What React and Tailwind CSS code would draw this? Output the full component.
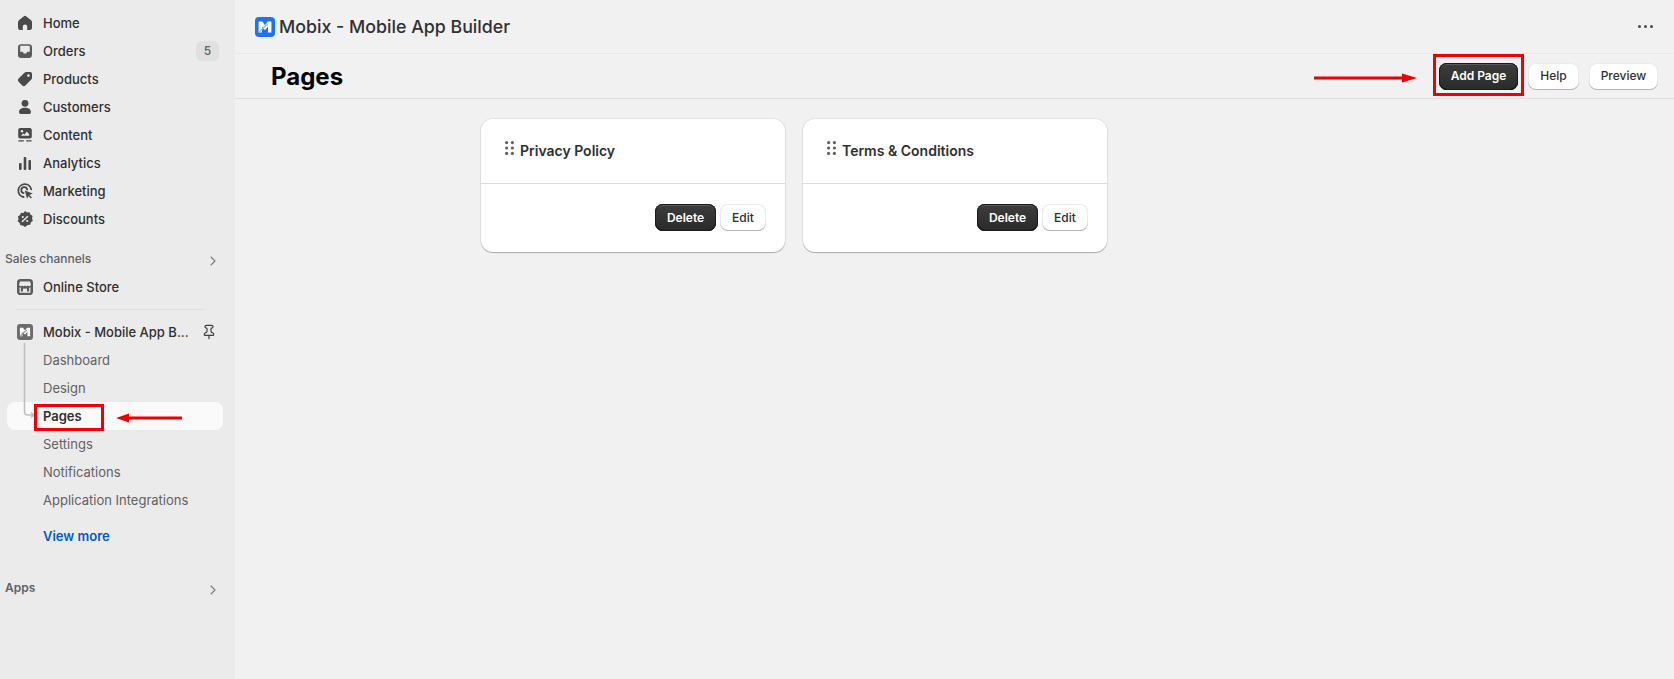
import { ChevronRight, Pin } from "lucide-react";

const darkBtn =
  "h-[27px] rounded-lg bg-gradient-to-b from-[#3d3d3d] to-[#2a2a2a] text-white text-xs font-semibold shadow-[inset_0_0_0_1px_#1a1a1a,inset_0_2px_0_#5a5a5a,inset_0_-1px_0_#111]";
const lightBtn =
  "h-[27px] rounded-lg bg-white text-[#303030] text-xs font-medium shadow-[inset_0_-1px_0_#b5b5b5,inset_0_0_0_1px_rgba(0,0,0,0.08)]";

// sidebar icons
function HomeIcon() {
  return (
    <svg viewBox="0 0 20 20" className="w-5 h-5" fill="#4a4a4a">
      <path d="M8.6 3.4a2.2 2.2 0 0 1 2.8 0l4.4 3.6a3 3 0 0 1 1.2 2.4v5.4a2.2 2.2 0 0 1-2.2 2.2h-2.6v-3.4a2.2 2.2 0 0 0-4.4 0V17H5.2A2.2 2.2 0 0 1 3 14.8V9.4A3 3 0 0 1 4.2 7z" />
    </svg>
  );
}

function OrdersIcon() {
  return (
    <svg viewBox="0 0 20 20" className="w-5 h-5">
      <rect x="3" y="3.2" width="14" height="13.8" rx="3.2" fill="#5a5a5a" />
      <path d="M5.2 5.6q0-.8.8-.8h8q.8 0 .8.8v5.2h-2.6l-1 1.8H8.8l-1-1.8H5.2z" fill="#ebebeb" />
    </svg>
  );
}

function ProductsIcon() {
  return (
    <svg viewBox="0 0 20 20" className="w-5 h-5">
      <path d="M11.2 3h4.1A1.7 1.7 0 0 1 17 4.7v4.1a2.4 2.4 0 0 1-.7 1.7l-5.9 5.9a2.2 2.2 0 0 1-3.1 0l-3.7-3.7a2.2 2.2 0 0 1 0-3.1l5.9-5.9a2.4 2.4 0 0 1 1.7-.7z" fill="#4a4a4a" />
      <circle cx="13.4" cy="6.6" r="1.3" fill="#ebebeb" />
    </svg>
  );
}

function CustomersIcon() {
  return (
    <svg viewBox="0 0 20 20" className="w-5 h-5" fill="#4a4a4a">
      <circle cx="10" cy="6.3" r="3.4" />
      <path d="M4 15.2c0-2.9 2.5-4.4 6-4.4s6 1.5 6 4.4a1.8 1.8 0 0 1-1.8 1.8H5.8A1.8 1.8 0 0 1 4 15.2z" />
    </svg>
  );
}

function ContentIcon() {
  return (
    <svg viewBox="0 0 20 20" className="w-5 h-5">
      <rect x="3.2" y="3" width="13.6" height="10.6" rx="2" fill="#4a4a4a" />
      <path d="M6 10.8l2-2.4 1.6 1.2 2.2-3 2.4 2.6v1.6z" fill="#ebebeb" />
      <circle cx="7" cy="6.3" r="1.2" fill="#ebebeb" />
      <path d="M3.4 15.9h5.4M11.2 15.9h5.4" stroke="#4a4a4a" strokeWidth="1.4" />
    </svg>
  );
}

function AnalyticsIcon() {
  return (
    <svg viewBox="0 0 20 20" className="w-5 h-5" fill="#4a4a4a">
      <rect x="4" y="10" width="2.6" height="7" rx="1" />
      <rect x="8.7" y="4" width="2.6" height="13" rx="1" />
      <rect x="13.4" y="7" width="2.6" height="10" rx="1" />
    </svg>
  );
}

function MarketingIcon() {
  return (
    <svg viewBox="0 0 20 20" className="w-5 h-5" fill="none">
      <path d="M16.2 8.4A6.5 6.5 0 1 0 8.6 16" stroke="#4a4a4a" strokeWidth="1.8" strokeLinecap="round" />
      <path d="M12.2 8.5a3 3 0 1 0-3.6 3.6" stroke="#4a4a4a" strokeWidth="1.8" strokeLinecap="round" />
      <path d="M9.8 9.6l8 2.8-3.3 1.5 2.4 2.6-1.1 1-2.4-2.5-1.3 3z" fill="#4a4a4a" />
    </svg>
  );
}

function DiscountsIcon() {
  return (
    <svg viewBox="0 0 20 20" className="w-5 h-5">
      <path d="M10 2l2 1.5 2.5-.2.9 2.3 2.2 1.3-.6 2.5.9 2.4-2 1.5-.7 2.4-2.5.2L10 18l-2.2-1.6-2.5-.2-.7-2.4-2-1.5.9-2.4-.6-2.5 2.2-1.3.9-2.3 2.5.2z" fill="#4a4a4a" />
      <path d="M7.4 12.6l5.2-5.2" stroke="#ebebeb" strokeWidth="1.4" strokeLinecap="round" />
      <circle cx="7.8" cy="8" r="1.1" fill="#ebebeb" />
      <circle cx="12.2" cy="12" r="1.1" fill="#ebebeb" />
    </svg>
  );
}

function StoreIcon() {
  return (
    <svg viewBox="0 0 20 20" className="w-5 h-5">
      <rect x="2" y="2" width="16" height="16" rx="3.6" fill="#5c5c5c" />
      <path d="M5 4.6h10l1 3.2a1.8 1.8 0 0 1-3 .8 2.2 2.2 0 0 1-3 0 2.2 2.2 0 0 1-3 0 1.8 1.8 0 0 1-3-.8z" fill="#ebebeb" />
      <path d="M5.2 10.5v4.6h9.6v-4.6" stroke="#ebebeb" strokeWidth="1.3" fill="none" />
      <rect x="8" y="11.6" width="4" height="3.5" fill="#ebebeb" />
    </svg>
  );
}

function MobixMark({ bg, stripe, className }) {
  return (
    <svg viewBox="0 0 20 20" className={className}>
      <rect x="0" y="0" width="20" height="20" rx="4" fill={bg} />
      <path d="M3.6 4.6h3.8l2.6 3.6 2.6-3.6h3.8v10.8h-3.4V9.6l-2.6 3.2h-.8L7 9.6v5.8H3.6z" fill="#fff" />
      <path d="M4 15.4l5.4-5.6 3.2-2.2" stroke={stripe} strokeWidth="1.3" fill="none" />
    </svg>
  );
}

const mainNav = [
  { label: "Home", icon: <HomeIcon /> },
  { label: "Orders", icon: <OrdersIcon />, badge: "5" },
  { label: "Products", icon: <ProductsIcon /> },
  { label: "Customers", icon: <CustomersIcon /> },
  { label: "Content", icon: <ContentIcon /> },
  { label: "Analytics", icon: <AnalyticsIcon /> },
  { label: "Marketing", icon: <MarketingIcon /> },
  { label: "Discounts", icon: <DiscountsIcon /> },
];

const subNav = ["Dashboard", "Design", "Pages", "Settings", "Notifications", "Application Integrations"];

function NavRow({ icon, label, badge }) {
  return (
    <div className="h-7 flex items-center pl-[15px] pr-4 gap-2 text-[13px] font-[550] text-[#303030]">
      <span className="w-5 h-5 shrink-0">{icon}</span>
      <span className="flex-1 pt-0.5">{label}</span>
      {badge && (
        <span className="w-[23px] h-5 rounded-md bg-[#e0e0e0] text-[#616161] text-xs flex items-center justify-center">
          {badge}
        </span>
      )}
    </div>
  );
}

function SectionLabel({ children, className }) {
  return (
    <div className={`flex items-center justify-between pl-[5px] pr-[14px] text-xs text-[#616161] ${className}`}>
      <span>{children}</span>
      <ChevronRight className="w-4 h-4 text-[#7a7a7a] mt-[3px]" strokeWidth={1.6} />
    </div>
  );
}

function Sidebar() {
  return (
    <aside className="w-[235px] shrink-0 bg-[#ebebeb] pt-[9px]">
      {mainNav.map((item) => (
        <NavRow key={item.label} {...item} />
      ))}

      <SectionLabel className="h-5 mt-4 font-medium">Sales channels</SectionLabel>
      <div className="mt-1">
        <NavRow label="Online Store" icon={<StoreIcon />} />
      </div>
      <div className="h-px bg-[#e0e0e0] ml-[15px] mr-[30px] mt-2 mb-2" />

      <div className="relative">
        <div className="h-7 flex items-center pl-[15px] pr-[18px] gap-2 text-[13px] font-[550] text-[#303030]">
          <span className="w-5 h-5 shrink-0 flex items-center justify-center">
            <MobixMark bg="#6b6b6b" stripe="#8a8a8a" className="w-4 h-4" />
          </span>
          <span className="flex-1 whitespace-nowrap pt-0.5">Mobix - Mobile App B...</span>
          <Pin className="w-4 h-4 text-[#3f3f3f]" strokeWidth={1.8} />
        </div>
        {subNav.map((label) =>
          label === "Pages" ? (
            <div key={label} className="h-7 ml-[7px] mr-3 pl-9 pt-0.5 rounded-lg bg-[#fafafa] flex items-center text-[13px] font-semibold text-[#303030]">
              {label}
            </div>
          ) : (
            <div key={label} className="h-7 pl-[43px] pt-0.5 flex items-center text-[13px] text-[#616161]">
              {label}
            </div>
          )
        )}
        {/* tree connector */}
        <svg className="absolute left-[20px] top-[25px] w-[16px] h-[76px]" viewBox="0 0 16 76" fill="none" stroke="#bdbdbd" strokeWidth="1.5">
          <path d="M4.5 0v69q0 3 3 3h6M11 69.5l3 2.5-3 2.5" />
        </svg>
      </div>

      <div className="h-7 pl-[43px] mt-[8px] pt-0.5 flex items-center text-[13px] font-semibold text-[#005bd3]">View more</div>
      <SectionLabel className="h-5 mt-[28px] font-semibold">Apps</SectionLabel>
    </aside>
  );
}

function PageCard({ title }) {
  return (
    <div className="bg-white rounded-xl shadow-[0_1px_1px_rgba(0,0,0,0.25),0_0_0_1px_rgba(0,0,0,0.05)]">
      <div className="h-[65px] pl-6 flex items-start border-b border-[#dcdcdc]">
        <svg viewBox="0 0 9 14" className="w-[9px] h-[14px] mt-[22px] shrink-0" fill="#616161">
          <circle cx="1.6" cy="1.6" r="1.6" />
          <circle cx="7.4" cy="1.6" r="1.6" />
          <circle cx="1.6" cy="7" r="1.6" />
          <circle cx="7.4" cy="7" r="1.6" />
          <circle cx="1.6" cy="12.4" r="1.6" />
          <circle cx="7.4" cy="12.4" r="1.6" />
        </svg>
        <h3 className="ml-[6px] mt-[22px] text-sm font-semibold leading-5 text-[#303030]">{title}</h3>
      </div>
      <div className="h-[68px] pr-[19px] flex items-start justify-end gap-1 pt-5">
        <button className={`${darkBtn} w-[61px]`}>Delete</button>
        <button className={`${lightBtn} w-[46px]`}>Edit</button>
      </div>
    </div>
  );
}

function Annotations() {
  return (
    <>
      <div className="absolute left-[1433px] top-[54px] w-[91px] h-[42px] border-[3px] border-[#f00000]" />
      <div className="absolute left-[34px] top-[404px] w-[70px] h-[27px] border-[3px] border-[#f00000]" />
      <svg className="absolute left-[1312px] top-[70px] w-[106px] h-4" viewBox="0 0 106 16">
        <path d="M2 8h90" stroke="#f00000" strokeWidth="3" />
        <path d="M90 3.5L105 8 90 12.5z" fill="#f00000" />
      </svg>
      <svg className="absolute left-[114px] top-[410px] w-[70px] h-4" viewBox="0 0 70 16">
        <path d="M68 8H12" stroke="#f00000" strokeWidth="3" />
        <path d="M15 3.5L2 8l13 4.5z" fill="#f00000" />
      </svg>
    </>
  );
}

export default function App() {
  return (
    <div className="relative w-[1674px] h-[679px] overflow-hidden flex bg-[#f1f1f1] [font-family:Inter,sans-serif]">
      <Sidebar />
      <main className="flex-1 min-w-0">
        <header className="h-[54px] border-b border-[#e8e8e8] pl-5 pr-[21px] flex items-center">
          <MobixMark bg="#1f72f2" stripe="#8db8f8" className="w-5 h-5" />
          <span className="ml-1 pt-0.5 text-[17.8px] font-medium text-[#303030]">Mobix - Mobile App Builder</span>
          <div className="ml-auto flex gap-[3px]">
            <span className="w-[3px] h-[3px] rounded-full bg-[#4a4a4a]" />
            <span className="w-[3px] h-[3px] rounded-full bg-[#4a4a4a]" />
            <span className="w-[3px] h-[3px] rounded-full bg-[#4a4a4a]" />
          </div>
        </header>
        <div className="h-[45px] border-b border-[#dedede] pl-9 pr-4 flex items-center">
          <h1 className="text-2xl font-bold text-black pt-0.5">Pages</h1>
          <div className="ml-auto flex items-center gap-[10px]">
            <button className={`${darkBtn} w-[79px]`}>Add Page</button>
            <button className={`${lightBtn} w-[51px]`}>Help</button>
            <button className={`${lightBtn} w-[69px]`}>Preview</button>
          </div>
        </div>
        <div className="pt-5 pl-[246px] grid grid-cols-[304px_304px] gap-[18px]">
          <PageCard title="Privacy Policy" />
          <PageCard title="Terms & Conditions" />
        </div>
      </main>
      <Annotations />
    </div>
  );
}
